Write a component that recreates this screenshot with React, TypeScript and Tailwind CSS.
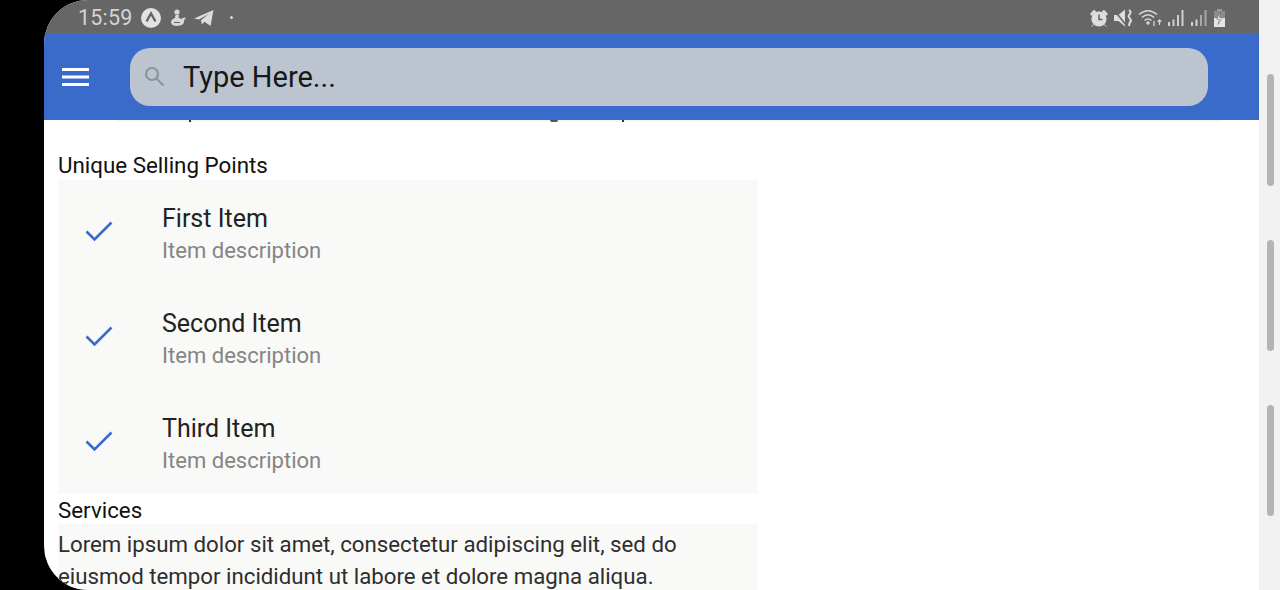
import React from 'react';

const ITEMS = ['First Item', 'Second Item', 'Third Item'];

const StatusLeft = () => (
  <div className="flex items-center h-[34px] pl-[34px] pt-[1px] text-[#d4d4d4]">
    <span className="text-[21.5px] leading-none w-[60px] tracking-[0.2px]">15:59</span>
    <svg width="22" height="22" viewBox="0 0 22 22" className="ml-[2px]">
      <circle cx="11" cy="11" r="10" fill="#e2e2e2" />
      <path d="M6.5 14.5 L11 6.5 L15.5 14.5" fill="none" stroke="#666" strokeWidth="2.4" />
    </svg>
    <svg width="20" height="20" viewBox="0 0 20 20" className="ml-[6px]" fill="#d8d8d8">
      <circle cx="9" cy="4" r="2.6" />
      <path d="M7.5 7 L11 7 L10.5 9.5 L13 11 Q16 8.5 18 10 Q16 11.5 16 13 Q16.5 17.5 9 18 Q3 18 3 14 Q3.5 11 7 10 Z" />
      <path d="M6 14.5 L12 14.5" stroke="#666" strokeWidth="1.2" />
    </svg>
    <svg width="22" height="20" viewBox="0 0 22 20" className="ml-[5px]" fill="#dcdcdc">
      <path d="M1 10.5 L20.5 2 L17.5 18 L11.5 13.8 L8.8 16.5 L8 12.2 L15.5 6 L6 11.6 Z" />
    </svg>
    <span className="ml-[15px] w-[3px] h-[3px] rounded-full bg-[#d8d8d8]" />
  </div>
);

const StatusRight = () => (
  <div className="flex items-center h-[34px] pr-[33px] pt-[1px] gap-[3px]">
    <svg width="20" height="20" viewBox="0 0 20 20" fill="#dedede">
      <circle cx="10" cy="11" r="7.6" />
      <path d="M1.5 6 L5 2.2 L6.8 3.8 L3 7.6Z M18.5 6 L15 2.2 L13.2 3.8 L17 7.6Z M4.5 16.5 L3 18.5 M15.5 16.5 L17 18.5" stroke="#dedede" strokeWidth="1" />
      <path d="M10 6.5 V11.5 H13.5" fill="none" stroke="#666" strokeWidth="1.6" />
    </svg>
    <svg width="22" height="20" viewBox="0 0 22 20" className="ml-[1px]" fill="#dedede">
      <path d="M1 7 H5.5 L12 1.5 V18.5 L5.5 13 H1Z" />
      <path d="M1 2 L13 17" stroke="#666" strokeWidth="1.6" />
      <path d="M16 2 Q19 4 16.5 6.5 Q14.5 8.5 17 10.5 Q19 13 16.5 15 L16 18" fill="none" stroke="#dedede" strokeWidth="2" />
    </svg>
    <svg width="26" height="20" viewBox="0 0 26 20" fill="none" stroke="#d6d6d6" strokeWidth="1.5">
      <path d="M1 6.5 Q10 -1 19 6.5" />
      <path d="M3.8 9.5 Q10 4 16.2 9.5" />
      <path d="M6.5 12.5 Q10 9.5 13.5 12.5" />
      <circle cx="10" cy="15" r="1" fill="#d6d6d6" />
      <path d="M16 13 V18 M21.5 12 V17 M19.8 13.8 L21.5 12 L23.2 13.8" strokeWidth="1.3" />
    </svg>
    <svg width="19" height="20" viewBox="0 0 19 20" fill="#cfcfcf">
      <rect x="1" y="14" width="2" height="4" />
      <rect x="5.5" y="11.5" width="2" height="6.5" />
      <rect x="10" y="7" width="2" height="11" />
      <rect x="14.5" y="2" width="2" height="16" />
    </svg>
    <svg width="19" height="20" viewBox="0 0 19 20" className="ml-[1px]" fill="#a8a8a8">
      <rect x="1" y="14" width="2" height="4" fill="#d0d0d0" />
      <rect x="5.5" y="11.5" width="2" height="6.5" fill="#d0d0d0" />
      <rect x="10" y="7" width="2" height="11" />
      <rect x="14.5" y="2" width="2" height="16" />
    </svg>
    <svg width="13" height="20" viewBox="0 0 13 20" className="ml-[1px]">
      <rect x="4" y="1" width="5" height="2" fill="#9a9a9a" />
      <rect x="1" y="3" width="11" height="16" fill="#8c8c8c" />
      <rect x="1" y="10" width="11" height="9" fill="#e4e4e4" />
      <path d="M8 4 L3.5 11 H6.5 L5 16.5 L9.5 9.5 H6.5Z" fill="#f0f0f0" stroke="#555" strokeWidth="0.5" />
    </svg>
  </div>
);

const Header = () => (
  <header className="flex items-center h-[86px] bg-[#3a6bcb] shrink-0">
    <svg width="27" height="18" viewBox="0 0 27 18" className="ml-[18px] mb-[1px]" fill="#ffffff">
      <rect x="0" y="0" width="27" height="3" />
      <rect x="0" y="7.5" width="27" height="3" />
      <rect x="0" y="15" width="27" height="3" />
    </svg>
    <div className="ml-[41px] mr-[51px] flex-1 h-[58px] rounded-[20px] bg-[#bcc5cf] flex items-center">
      <svg width="21" height="21" viewBox="0 0 21 21" fill="none" stroke="#8b939b" strokeWidth="2.2" className="ml-[14px] mb-[1px]">
        <circle cx="8" cy="8" r="6" />
        <path d="M12.5 12.5 L19.5 19.5" />
      </svg>
      <span className="ml-[18px] pt-[1px] text-[29px] leading-none text-[#16181a]">Type Here...</span>
    </div>
  </header>
);

const Scrollbar = () => (
  <div className="w-[21px] shrink-0 h-full bg-[#f2f2f2] flex flex-col items-center gap-[54px] pt-[74px] pl-[1px]">
    <div className="w-[7px] h-[112px] shrink-0 rounded-full bg-[#b4b4b4]" />
    <div className="w-[7px] h-[111px] shrink-0 rounded-full bg-[#b4b4b4]" />
    <div className="w-[7px] h-[111px] shrink-0 rounded-full bg-[#b4b4b4]" />
  </div>
);

export default function App() {
  return (
    <div className="w-[1280px] h-[590px] bg-black flex overflow-hidden font-['Roboto',sans-serif]">
      <main className="ml-[44px] flex-1 h-full bg-white rounded-l-[44px] overflow-hidden flex flex-col">
        <div className="bg-[#666666] shrink-0 flex justify-between">
          <StatusLeft />
          <StatusRight />
        </div>
        <Header />

        {/* tail of the paragraph scrolled under the header */}
        <div className="relative h-[2px] mx-[72px] mr-[37px] bg-[#f4f6fb] shrink-0">
          <span className="absolute left-[73px] top-0 w-[2px] h-[2px] bg-[#333]" />
          <span className="absolute left-[434px] top-0 w-[8px] h-[2px] rounded-b-full bg-[#555]" />
          <span className="absolute left-[506px] top-0 w-[2px] h-[2px] bg-[#333]" />
        </div>

        <section className="pl-[14px] pt-[30px] w-[714px]">
          <h2 className="text-[22.35px] leading-[27px] text-[#111]">Unique Selling Points</h2>
          <ul className="mt-[1px] h-[314px] bg-[#f9f9f7]">
            {ITEMS.map((title) => (
              <li key={title} className="h-[105px] flex items-center">
                <svg width="28" height="22" viewBox="0 0 28 22" fill="none" stroke="#3a6bcb" strokeWidth="2.6" className="ml-[27px] mb-[4px]">
                  <path d="M1.5 11.5 L9.5 19.5 L26.5 2.5" />
                </svg>
                <div className="ml-[49px] pt-[3px]">
                  <div className="text-[25px] leading-[33px] text-[#222]">{title}</div>
                  <div className="text-[22.05px] leading-[32px] text-[#858585]">Item description</div>
                </div>
              </li>
            ))}
          </ul>
          <h2 className="mt-[2px] text-[22.35px] leading-[28px] text-[#111]">Services</h2>
          <p className="bg-[#f9f9f7] text-[22.25px] leading-[32px] text-[#2e2e2e] h-[80px] pt-[4px]">
            Lorem ipsum dolor sit amet, consectetur adipiscing elit, sed do
            <br />
            eiusmod tempor incididunt ut labore et dolore magna aliqua.
          </p>
        </section>
      </main>
      <Scrollbar />
    </div>
  );
}
